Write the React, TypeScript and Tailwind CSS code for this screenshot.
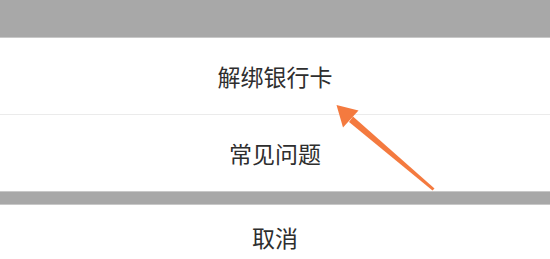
import React from "react";

export default function App() {
  return (
    <div className="relative w-[550px] h-[259px] overflow-hidden bg-white" style={{ fontFamily: '"Noto Sans CJK SC", "Noto Sans", sans-serif' }}>
      <div className="h-[38px] bg-[#a8a8a8] border-b border-[#c8c8c8]" />
      <div className="h-[77px] flex items-center justify-center border-b border-[#ebebeb] text-[23px] text-[#2e2e2e]">
        解绑银行卡
      </div>
      <div className="h-[76px] flex items-center justify-center text-[23px] text-[#2e2e2e]">
        常见问题
      </div>
      <div className="h-[14px] bg-[#a8a8a8] border-y border-[#c8c8c8]" />
      <div className="h-[64px] flex items-center justify-center text-[23px] text-[#2e2e2e]">
        取消
      </div>
      <svg className="absolute left-0 top-0" width="550" height="259" viewBox="0 0 550 259">
        <polygon points="432.5,190.5 434.5,188.5 353,116.5 349,122" fill="#f47a3f" />
        <polygon points="336.5,105 358.5,110.5 343,127.5" fill="#f47a3f" />
      </svg>
    </div>
  );
}
